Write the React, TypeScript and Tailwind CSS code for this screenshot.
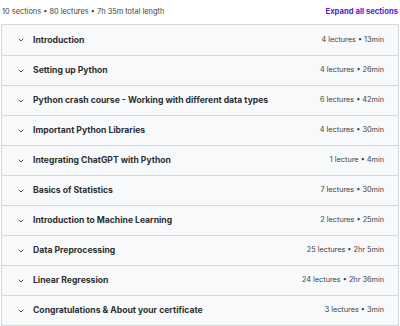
import { ChevronDown } from "lucide-react";

const sections = [
  { title: "Introduction", meta: "4 lectures • 13min" },
  { title: "Setting up Python", meta: "4 lectures • 26min" },
  { title: "Python crash course - Working with different data types", meta: "6 lectures • 42min" },
  { title: "Important Python Libraries", meta: "4 lectures • 30min" },
  { title: "Integrating ChatGPT with Python", meta: "1 lecture • 4min" },
  { title: "Basics of Statistics", meta: "7 lectures • 30min" },
  { title: "Introduction to Machine Learning", meta: "2 lectures • 25min" },
  { title: "Data Preprocessing", meta: "25 lectures • 2hr 5min" },
  { title: "Linear Regression", meta: "24 lectures • 2hr 36min" },
  { title: "Congratulations & About your certificate", meta: "3 lectures • 3min" },
];

export default function App() {
  return (
    <div className="w-[400px] h-[326px] bg-white overflow-hidden font-['Inter',sans-serif] text-[#2d2f31]">
      <div className="flex items-center justify-between h-[24px] pl-[2px] pr-[2px]">
        <span className="text-[7.4px] text-[#3e4143]">10 sections • 80 lectures • 7h 35m total length</span>
        <span className="text-[7.7px] font-bold text-[#5624d0]">Expand all sections</span>
      </div>
      <div className="mx-[1px] border border-[#d1d7dc]">
        {sections.map((s, i) => (
          <div
            key={s.title}
            className={`flex items-center h-[30px] bg-[#f7f9fa] pl-[15px] pr-[14px] ${i > 0 ? "border-t border-[#d1d7dc]" : ""}`}
          >
            <ChevronDown className="w-[8px] h-[8px] text-[#2d2f31] mr-[8px]" strokeWidth={2.5} />
            <span className="flex-1 text-[8.6px] font-bold">{s.title}</span>
            <span className="text-[7.3px] text-[#3e4143]">{s.meta}</span>
          </div>
        ))}
      </div>
    </div>
  );
}
